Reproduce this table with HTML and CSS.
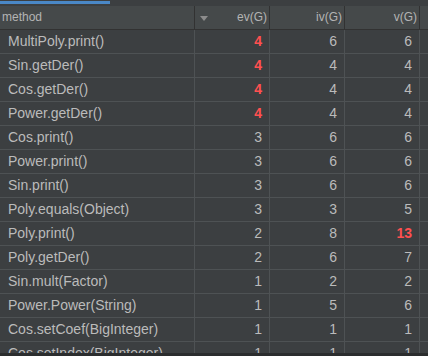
FILE: index.html
```html
<!DOCTYPE html>
<html lang="en">
<head>
  <meta charset="UTF-8">
  <title>Method metrics</title>
  <link rel="stylesheet" href="styles.css">
</head>
<body>
  <!-- Tab strip -->
  <div class="tab-strip">
    <div class="tab-active"></div>
  </div>

  <!-- Header -->
  <div class="row head">
    <div class="cell name">method</div>
    <div class="cell num sorted">ev(G)</div>
    <div class="cell num">iv(G)</div>
    <div class="cell num">v(G)</div>
    <div class="cell filler"></div>
  </div>

  <!-- Rows -->
  <div class="rows">
    <div class="row"><div class="cell name">MultiPoly.print()</div><div class="cell num hot">4</div><div class="cell num">6</div><div class="cell num">6</div></div>
    <div class="row"><div class="cell name">Sin.getDer()</div><div class="cell num hot">4</div><div class="cell num">4</div><div class="cell num">4</div></div>
    <div class="row"><div class="cell name">Cos.getDer()</div><div class="cell num hot">4</div><div class="cell num">4</div><div class="cell num">4</div></div>
    <div class="row"><div class="cell name">Power.getDer()</div><div class="cell num hot">4</div><div class="cell num">4</div><div class="cell num">4</div></div>
    <div class="row"><div class="cell name">Cos.print()</div><div class="cell num">3</div><div class="cell num">6</div><div class="cell num">6</div></div>
    <div class="row"><div class="cell name">Power.print()</div><div class="cell num">3</div><div class="cell num">6</div><div class="cell num">6</div></div>
    <div class="row"><div class="cell name">Sin.print()</div><div class="cell num">3</div><div class="cell num">6</div><div class="cell num">6</div></div>
    <div class="row"><div class="cell name">Poly.equals(Object)</div><div class="cell num">3</div><div class="cell num">3</div><div class="cell num">5</div></div>
    <div class="row"><div class="cell name">Poly.print()</div><div class="cell num">2</div><div class="cell num">8</div><div class="cell num hot">13</div></div>
    <div class="row"><div class="cell name">Poly.getDer()</div><div class="cell num">2</div><div class="cell num">6</div><div class="cell num">7</div></div>
    <div class="row"><div class="cell name">Sin.mult(Factor)</div><div class="cell num">1</div><div class="cell num">2</div><div class="cell num">2</div></div>
    <div class="row"><div class="cell name">Power.Power(String)</div><div class="cell num">1</div><div class="cell num">5</div><div class="cell num">6</div></div>
    <div class="row"><div class="cell name">Cos.setCoef(BigInteger)</div><div class="cell num">1</div><div class="cell num">1</div><div class="cell num">1</div></div>
    <div class="row"><div class="cell name">Cos.setIndex(BigInteger)</div><div class="cell num">1</div><div class="cell num">1</div><div class="cell num">1</div></div>
  </div>

  <div class="bottom-bar"></div>
</body>
</html>
```

FILE: styles.css
```css
* {
  margin: 0;
  padding: 0;
  box-sizing: border-box;
}

body {
  font-family: 'Liberation Sans', Arial, sans-serif;
  background-color: #3c3f41;
  color: #bbbbbb;
  width: 428px;
  height: 356px;
  overflow: hidden;
  position: relative;
}

/* Tab strip */
.tab-strip {
  height: 6px;
  background-color: #3c3f41;
  padding-top: 1px;
}

.tab-active {
  width: 110px;
  height: 3px;
  background-color: #4a88c7;
}

/* Grid rows */
.row {
  display: grid;
  grid-template-columns: 195px 75px 75px 75px;
  height: 24px;
  border-bottom: 1px solid #4e5254;
}

.cell {
  border-right: 1px solid #4e5254;
  font-size: 14px;
  line-height: 23px;
  white-space: nowrap;
  overflow: hidden;
}

.cell.name {
  padding-left: 8px;
}

.cell.num {
  text-align: right;
  padding-right: 7px;
}

.cell.hot {
  color: #ff5050;
  font-weight: bold;
}

/* Header */
.row.head {
  grid-template-columns: 195px 75px 75px 75px 8px;
  background-color: #45494a;
  border-bottom: 1px solid #323232;
}

.head .cell {
  font-size: 12px;
  border-right-color: #323232;
  color: #b4b4b4;
}

.head .cell.name {
  padding-left: 2px;
}

.head .cell.num {
  padding-right: 2px;
}

.head .cell.filler {
  border-right: none;
}

/* Sort marker on ev(G) */
.head .sorted {
  position: relative;
}

.head .sorted::before {
  content: "";
  position: absolute;
  left: 5px;
  top: 10px;
  border-left: 4px solid transparent;
  border-right: 4px solid transparent;
  border-top: 5px solid #8c8c8c;
}

/* Bottom bar */
.bottom-bar {
  position: absolute;
  left: 0;
  right: 0;
  bottom: 0;
  height: 3px;
  background-color: #2b2d2e;
}
```
